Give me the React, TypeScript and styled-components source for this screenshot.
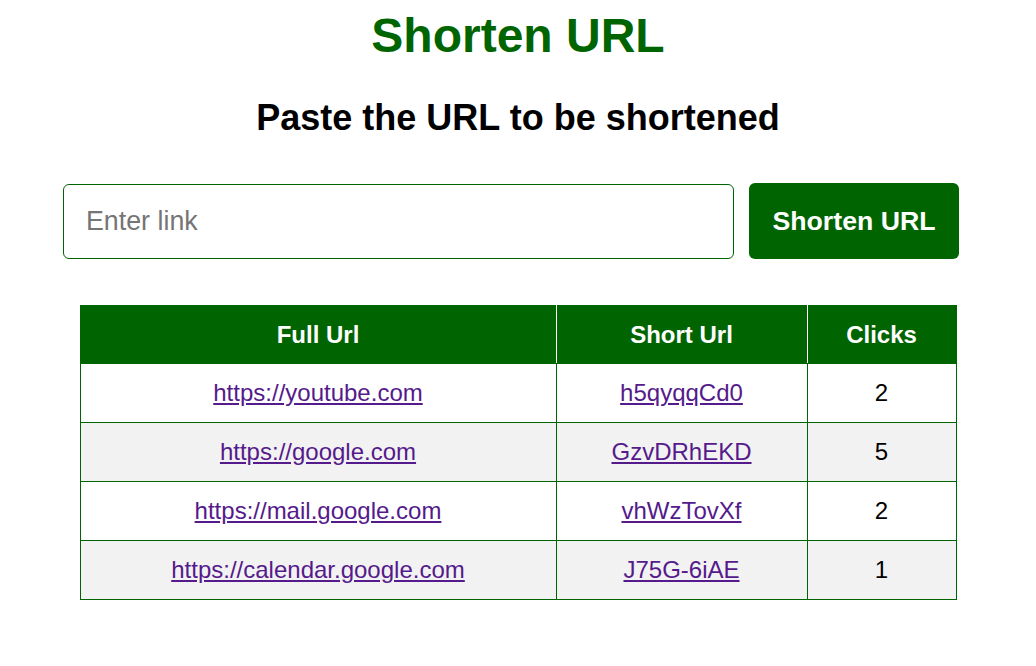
import React from "react";
import styled, { createGlobalStyle } from "styled-components";

const GlobalStyle = createGlobalStyle`
  html, body {
    margin: 0;
    padding: 0;
    background: #ffffff;
    font-family: "Liberation Sans", Arial, sans-serif;
    color: #000000;
  }
`;

const Page = styled.main`
  display: flex;
  flex-direction: column;
  align-items: center;
  padding-top: 8px;
`;

const Title = styled.h1`
  margin: 0;
  font-size: 48px;
  font-weight: 700;
  color: #006400;
  line-height: 55px;
`;

const Subtitle = styled.h2`
  margin: 34px 0 0;
  font-size: 36px;
  font-weight: 700;
  line-height: 41px;
`;

const Form = styled.form`
  width: 910px;
  margin-top: 45px;
  display: grid;
  grid-template-columns: 671px 210px;
  column-gap: 15px;
  align-items: center;
`;

const LinkInput = styled.input`
  box-sizing: border-box;
  height: 75px;
  width: 100%;
  margin-top: 1px;
  padding: 0 22px;
  border: 1px solid #006400;
  border-radius: 6px;
  font-family: "Liberation Sans", Arial, sans-serif;
  font-size: 26.8px;
  color: #000;
  outline: none;
  &::placeholder {
    color: #757575;
  }
`;

const SubmitButton = styled.button`
  box-sizing: border-box;
  height: 76px;
  width: 100%;
  border: none;
  border-radius: 6px;
  background: #006400;
  color: #ffffff;
  font-family: "Liberation Sans", Arial, sans-serif;
  font-size: 26.7px;
  font-weight: 700;
  cursor: pointer;
`;

const Table = styled.table`
  margin-top: 46px;
  border-collapse: collapse;
  table-layout: fixed;
  font-size: 24px;
`;

const HeadCell = styled.th<{ $w: number }>`
  width: ${(p) => p.$w}px;
  height: 57px;
  padding: 0;
  background: #006400;
  color: #ffffff;
  font-weight: 700;
  text-align: center;
  border: 1px solid #006400;
  border-left-color: #ffffff;
  border-right-color: #ffffff;
  &:first-child {
    border-left-color: #006400;
  }
  &:last-child {
    border-right-color: #006400;
  }
`;

const Row = styled.tr<{ $alt: boolean }>`
  background: ${(p) => (p.$alt ? "#f2f2f2" : "#ffffff")};
`;

const Cell = styled.td`
  height: 58px;
  padding: 0;
  text-align: center;
  border: 1px solid #006400;
`;

const Link = styled.a`
  color: #551a8b;
  text-decoration: underline;
`;

const rows = [
  { full: "https://youtube.com", short: "h5qyqqCd0", clicks: 2 },
  { full: "https://google.com", short: "GzvDRhEKD", clicks: 5 },
  { full: "https://mail.google.com", short: "vhWzTovXf", clicks: 2 },
  { full: "https://calendar.google.com", short: "J75G-6iAE", clicks: 1 },
];

export default function App() {
  return (
    <>
      <GlobalStyle />
      <Page>
        <Title>Shorten URL</Title>
        <Subtitle>Paste the URL to be shortened</Subtitle>
        <Form onSubmit={(e) => e.preventDefault()}>
          <LinkInput type="text" placeholder="Enter link" />
          <SubmitButton type="submit">Shorten URL</SubmitButton>
        </Form>
        <Table>
          <thead>
            <tr>
              <HeadCell $w={475}>Full Url</HeadCell>
              <HeadCell $w={250}>Short Url</HeadCell>
              <HeadCell $w={148}>Clicks</HeadCell>
            </tr>
          </thead>
          <tbody>
            {rows.map((r, i) => (
              <Row key={r.short} $alt={i % 2 === 1}>
                <Cell>
                  <Link href={r.full}>{r.full}</Link>
                </Cell>
                <Cell>
                  <Link href={`#${r.short}`}>{r.short}</Link>
                </Cell>
                <Cell>{r.clicks}</Cell>
              </Row>
            ))}
          </tbody>
        </Table>
      </Page>
    </>
  );
}
